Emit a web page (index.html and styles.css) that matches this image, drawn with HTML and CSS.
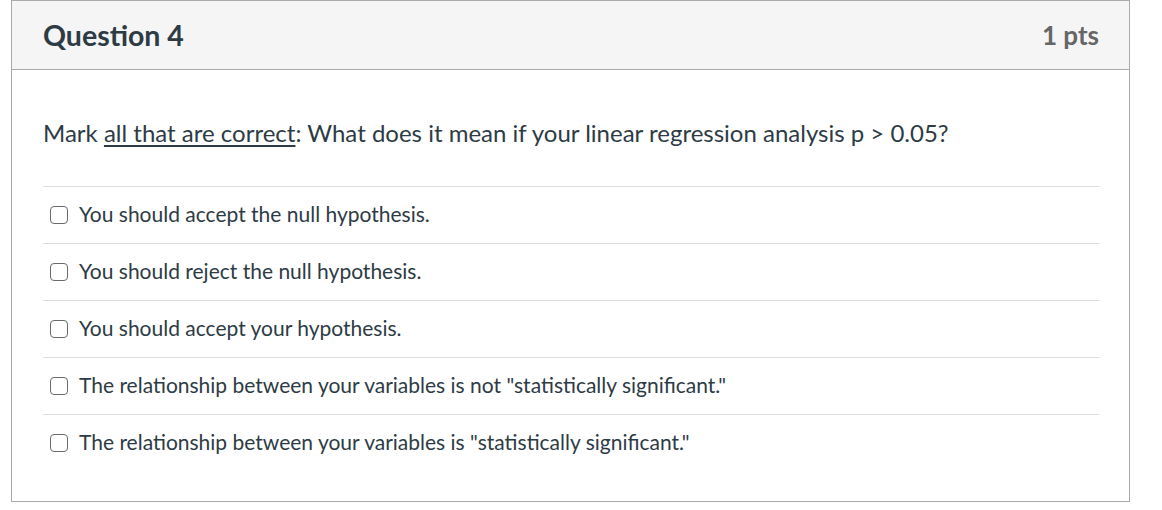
FILE: index.html
```html
<!DOCTYPE html>
<html>
<head>
<meta charset="utf-8">
<link rel="stylesheet" href="styles.css">
</head>
<body>
<div class="question">
  <div class="header">
    <span class="name">Question 4</span>
    <span class="points">1 pts</span>
  </div>
  <div class="content">
    <p class="text">Mark <u>all that are correct</u>: What does it mean if your linear regression analysis p &gt; 0.05?</p>
    <div class="answers">
      <label class="answer"><span class="box"></span><span class="label">You should accept the null hypothesis.</span></label>
      <label class="answer"><span class="box"></span><span class="label">You should reject the null hypothesis.</span></label>
      <label class="answer"><span class="box"></span><span class="label">You should accept your hypothesis.</span></label>
      <label class="answer"><span class="box"></span><span class="label">The relationship between your variables is not "statistically significant."</span></label>
      <label class="answer"><span class="box"></span><span class="label">The relationship between your variables is "statistically significant."</span></label>
    </div>
  </div>
</div>
</body>
</html>
```

FILE: styles.css
```css
html, body {
  margin: 0;
  padding: 0;
  background: #fff;
}
body {
  padding-left: 11px;
  width: 1119px;
  font-family: Lato, "Liberation Sans", sans-serif;
  color: #2d3b45;
}
.question {
  border: 1px solid #aaaaaa;
  height: 502px;
  box-sizing: border-box;
}
.header {
  height: 68px;
  background: #f5f5f5;
  border-bottom: 1px solid #aaaaaa;
  display: flex;
  align-items: center;
  justify-content: space-between;
  padding: 0 30px 0 31px;
}
.name {
  font-size: 28.5px;
  font-weight: 700;
  color: #2d3b45;
}
.points {
  font-size: 26px;
  font-weight: 700;
  color: #666;
}
.content {
  padding: 0 30px 0 31px;
}
.text {
  margin: 0;
  padding-top: 48px;
  height: 68px;
  font-size: 24px;
  line-height: 30px;
}
.text u {
  text-decoration-thickness: 1.5px;
  text-underline-offset: 3px;
}
.answers {
  border-top: 1px solid #dddddd;
}
.answer {
  display: flex;
  align-items: center;
  height: 56px;
  border-bottom: 1px solid #dddddd;
  font-size: 21px;
}
.answer:last-child {
  border-bottom: none;
}
.label {
  padding-bottom: 3px;
}
.box {
  width: 16px;
  height: 16px;
  border: 1.5px solid #6b6b6b;
  border-radius: 4px;
  margin: 0 11px 0 7px;
  flex: none;
}
```
